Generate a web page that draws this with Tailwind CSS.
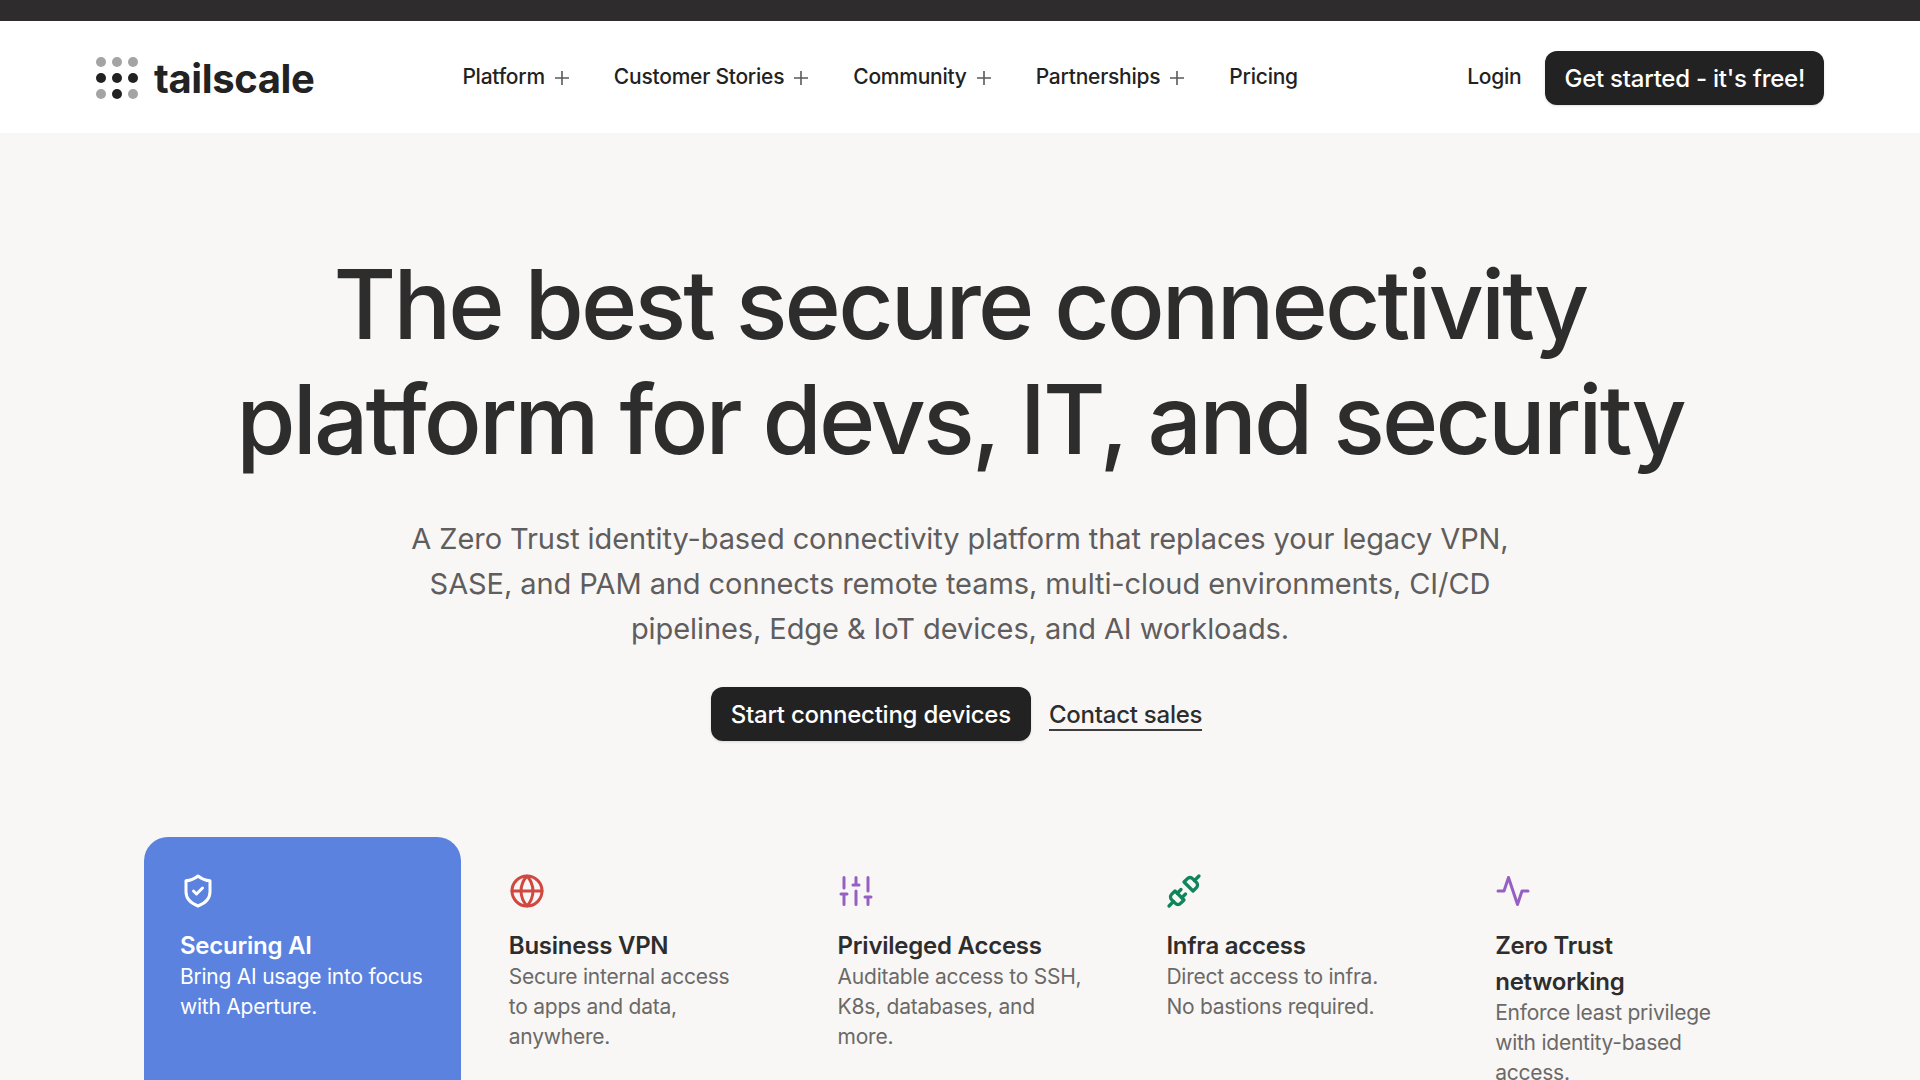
<!DOCTYPE html>
<html lang="en">
  <head>
    <meta charset="UTF-8" />
    <meta name="viewport" content="width=device-width, initial-scale=1.0" />
    <script src="https://cdn.jsdelivr.net/npm/@tailwindcss/browser@4"></script>
    <title>Tailscale</title>
  </head>
  <body
    class="bg-[#f8f7f5] font-['Inter','Liberation_Sans',sans-serif] text-[#2e2d2d] tracking-[-0.015em]"
  >
    <div class="h-[21px] bg-[#2e2c2d]"></div>

    <header class="flex items-center bg-white px-24 pt-0.5 h-28 text-[#232222]">
      <a href="#" class="flex items-center gap-4" aria-label="tailscale home">
        <svg class="w-[42px] h-[42px]" viewBox="0 0 42 42" fill="#232222" aria-hidden="true">
          <g fill="#a5a4a4">
            <circle cx="5" cy="5" r="5" />
            <circle cx="21" cy="5" r="5" />
            <circle cx="37" cy="5" r="5" />
            <circle cx="5" cy="37" r="5" />
            <circle cx="37" cy="37" r="5" />
          </g>
          <circle cx="5" cy="21" r="5" />
          <circle cx="21" cy="21" r="5" />
          <circle cx="37" cy="21" r="5" />
          <circle cx="21" cy="37" r="5" />
        </svg>
        <span class="mt-0.5 text-[40px] leading-10 font-bold tracking-[-0.01em]">tailscale</span>
      </a>

      <nav class="flex items-center gap-11 ml-[148px] mb-0.5 text-[21px] leading-7 font-medium">
        <button type="button" class="flex items-center gap-[9px]">
          Platform
          <svg class="w-4 h-4 mt-0.5" viewBox="0 0 16 16" fill="none" stroke="#5b5a5a" stroke-width="1.600" aria-hidden="true">
            <path d="M8 1v14M1 8h14" />
          </svg>
        </button>
        <button type="button" class="flex items-center gap-[9px]">
          Customer Stories
          <svg class="w-4 h-4 mt-0.5" viewBox="0 0 16 16" fill="none" stroke="#5b5a5a" stroke-width="1.600" aria-hidden="true">
            <path d="M8 1v14M1 8h14" />
          </svg>
        </button>
        <button type="button" class="flex items-center gap-[9px]">
          Community
          <svg class="w-4 h-4 mt-0.5" viewBox="0 0 16 16" fill="none" stroke="#5b5a5a" stroke-width="1.600" aria-hidden="true">
            <path d="M8 1v14M1 8h14" />
          </svg>
        </button>
        <button type="button" class="flex items-center gap-[9px]">
          Partnerships
          <svg class="w-4 h-4 mt-0.5" viewBox="0 0 16 16" fill="none" stroke="#5b5a5a" stroke-width="1.600" aria-hidden="true">
            <path d="M8 1v14M1 8h14" />
          </svg>
        </button>
        <a href="#">Pricing</a>
      </nav>

      <div class="flex items-center gap-6 ml-auto font-medium">
        <a href="#" class="text-[21px] leading-7 mb-0.5">Login</a>
        <a
          href="#"
          class="flex items-center h-[54px] px-[19px] pt-0.5 rounded-xl bg-[#232222] text-white text-2xl shadow-sm"
          >Get started - it's free!</a
        >
      </div>
    </header>

    <main>
      <section class="flex flex-col items-center pt-[114px] text-center">
        <h1 class="max-w-[1560px] text-8xl leading-[115px] font-medium tracking-[-0.03em]">
          The best secure connectivity platform for devs, IT, and security
        </h1>
        <p class="max-w-[1120px] mt-[39px] text-[29px] leading-[45px] tracking-[-0.003em] text-[#5f5d5d]">
          A Zero Trust identity-based connectivity platform that replaces your
          legacy VPN, SASE, and PAM and connects remote teams, multi-cloud
          environments, CI/CD pipelines, Edge &amp; IoT devices, and AI
          workloads.
        </p>
        <div class="flex items-center gap-[18px] mt-9 pr-[7px] text-2xl font-medium">
          <a
            href="#"
            class="flex items-center h-[54px] px-5 pt-0.5 rounded-xl bg-[#232222] text-white shadow-sm"
            >Start connecting devices</a
          >
          <a href="#" class="mt-1 border-b-2 border-[#3f3e3e] leading-7">Contact sales</a>
        </div>
      </section>

      <section class="grid grid-cols-5 gap-3 px-36 mt-24">
        <a href="#" class="block min-h-80 p-9 rounded-3xl bg-[#5b82df] text-white">
          <svg class="w-9 h-9" viewBox="0 0 24 24" fill="none" stroke="currentColor" stroke-width="2" stroke-linecap="round" stroke-linejoin="round" aria-hidden="true">
            <path d="M12 22c4-1.500 8-4.500 8-9.500V5.200C17 5 14.500 4 12 2 9.500 4 7 5 4 5.200v7.300c0 5 4 8 8 9.500z" />
            <path d="m9 12 2 2 4-4" />
          </svg>
          <h2 class="mt-[19px] text-2xl leading-9 font-semibold">Securing AI</h2>
          <p class="-mt-0.5 -mr-2 text-[21px] leading-[30px]">Bring AI usage into focus<br />with Aperture.</p>
        </a>
        <a href="#" class="block min-h-80 p-9 rounded-3xl">
          <svg class="w-9 h-9" viewBox="0 0 24 24" fill="none" stroke="#d04841" stroke-width="2" stroke-linecap="round" stroke-linejoin="round" aria-hidden="true">
            <circle cx="12" cy="12" r="10" />
            <path d="M2 12h20M12 2a15.300 15.300 0 0 1 4 10 15.300 15.300 0 0 1-4 10 15.300 15.300 0 0 1-4-10 15.300 15.300 0 0 1 4-10z" />
          </svg>
          <h2 class="mt-[19px] text-2xl leading-9 font-semibold">Business VPN</h2>
          <p class="-mt-0.5 -mr-2 text-[21px] leading-[30px] text-[#6b6968]">Secure internal access<br />to apps and data,<br />anywhere.</p>
        </a>
        <a href="#" class="block min-h-80 p-9 rounded-3xl">
          <svg class="w-9 h-9" viewBox="0 0 24 24" fill="none" stroke="#9560c2" stroke-width="2" stroke-linecap="round" stroke-linejoin="round" aria-hidden="true">
            <path d="M4 21v-7M4 10V3M12 21v-9M12 8V3M20 21v-5M20 12V3M2 14h4M10 8h4M18 16h4" />
          </svg>
          <h2 class="mt-[19px] text-2xl leading-9 font-semibold">Privileged Access</h2>
          <p class="-mt-0.5 -mr-2 text-[21px] leading-[30px] text-[#6b6968]">Auditable access to SSH,<br />K8s, databases, and<br />more.</p>
        </a>
        <a href="#" class="block min-h-80 p-9 rounded-3xl">
          <svg class="w-9 h-9" viewBox="0 0 24 24" fill="none" stroke="#118559" stroke-width="2.200" stroke-linecap="round" stroke-linejoin="round" aria-hidden="true">
            <path d="m19 5 3-3M2 22l3-3M7.500 13.500 10 11M10.500 16.500 13 14" />
            <path d="M6.300 20.300a2.400 2.400 0 0 0 3.400 0L12 18l-6-6-2.300 2.300a2.400 2.400 0 0 0 0 3.400z" />
            <path d="m12 6 6 6 2.300-2.300a2.400 2.400 0 0 0 0-3.400l-2.600-2.600a2.400 2.400 0 0 0-3.400 0z" />
          </svg>
          <h2 class="mt-[19px] text-2xl leading-9 font-semibold">Infra access</h2>
          <p class="-mt-0.5 -mr-2 text-[21px] leading-[30px] text-[#6b6968]">Direct access to infra.<br />No bastions required.</p>
        </a>
        <a href="#" class="block min-h-80 p-9 rounded-3xl">
          <svg class="w-9 h-9" viewBox="0 0 24 24" fill="none" stroke="#9560c2" stroke-width="2" stroke-linecap="round" stroke-linejoin="round" aria-hidden="true">
            <path d="M22 12h-4l-3 9L9 3l-3 9H2" />
          </svg>
          <h2 class="mt-[19px] text-2xl leading-9 font-semibold">Zero Trust<br />networking</h2>
          <p class="-mt-0.5 -mr-2 text-[21px] leading-[30px] text-[#6b6968]">Enforce least privilege<br />with identity-based<br />access.</p>
        </a>
      </section>
    </main>
  </body>
</html>
